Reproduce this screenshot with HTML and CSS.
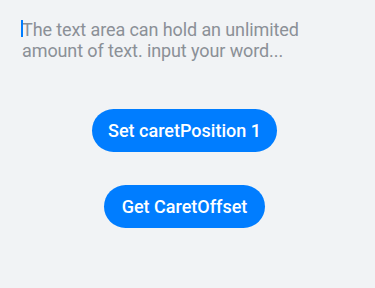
FILE: index.html
```html
<!DOCTYPE html>
<html>
<head>
<meta charset="utf-8">
<link rel="stylesheet" href="styles.css">
</head>
<body>
<div class="page">
  <div class="textarea">
    <span class="caret"></span><span class="placeholder">The text area can hold an unlimited amount of text. input your word...</span>
  </div>
  <div class="buttons">
    <button class="btn btn-set">Set caretPosition 1</button>
    <button class="btn btn-get">Get CaretOffset</button>
  </div>
</div>
</body>
</html>
```
FILE: styles.css
```css
html, body {
  margin: 0;
  padding: 0;
  background: #f1f3f5;
}
.page {
  width: 375px;
  height: 288px;
  display: flex;
  flex-direction: column;
  font-family: Roboto, "Liberation Sans", sans-serif;
}
.textarea {
  position: relative;
  margin: 19px 50px 0 21px;
  padding: 0 0 0 1px;
  font-size: 18px;
  letter-spacing: -0.1px;
  line-height: 21px;
  color: #8b9097;
  height: 42px;
}
.caret {
  position: absolute;
  left: 0;
  top: 1px;
  width: 1.5px;
  height: 17px;
  background: #007dff;
}
.buttons {
  display: flex;
  flex-direction: column;
  align-items: center;
  gap: 33px;
  margin-top: 48px;
  padding-right: 6px;
}
.btn {
  border: none;
  background: #007dff;
  color: #ffffff;
  font-family: Roboto, "Liberation Sans", sans-serif;
  font-size: 18px;
  font-weight: 500;
  height: 43px;
  border-radius: 22px;
  padding: 0;
}
.btn-set {
  width: 185px;
}
.btn-get {
  width: 161px;
}
```
